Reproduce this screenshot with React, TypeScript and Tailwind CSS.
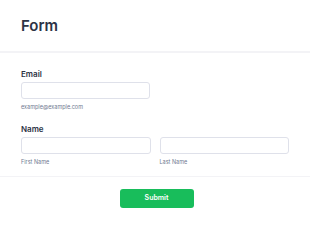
import React from 'react';

const font = { fontFamily: 'Inter, "Noto Sans", sans-serif' };

const Field: React.FC<{ hint: string; className?: string }> = ({ hint, className }) => (
  <div className={className}>
    <div className="h-[17px] rounded-[3px] border border-[#dfe1ea] bg-white" />
    <div className="mt-[4px] text-[5.5px] leading-[8px] text-[#6f7a90]">{hint}</div>
  </div>
);

export default function App() {
  return (
    <div className="w-[310px] h-[225px] bg-white text-[#2c3345]" style={font}>
      <div className="h-[53px] border-b-2 border-[#f3f3f6] px-[21px] pt-[16px]">
        <h1 className="text-[15px] leading-[20px] font-semibold">Form</h1>
      </div>

      <div className="px-[21px] pt-[16px]">
        <label className="block text-[8px] leading-[10px] font-semibold">Email</label>
        <Field hint="example@example.com" className="mt-[3px] w-[129px]" />
      </div>

      <div className="px-[21px] pt-[13px] pb-[10px] border-b border-[#f3f3f6]">
        <label className="block text-[8px] leading-[10px] font-semibold">Name</label>
        <div className="mt-[3px] flex gap-[9px]">
          <Field hint="First Name" className="w-[131px]" />
          <Field hint="Last Name" className="w-[131px]" />
        </div>
      </div>

      <div className="flex justify-center pt-[12px] pl-[3px]">
        <button className="w-[74px] h-[19px] rounded-[3px] bg-[#18bd5b] text-white text-[7px] font-semibold">
          Submit
        </button>
      </div>
    </div>
  );
}
